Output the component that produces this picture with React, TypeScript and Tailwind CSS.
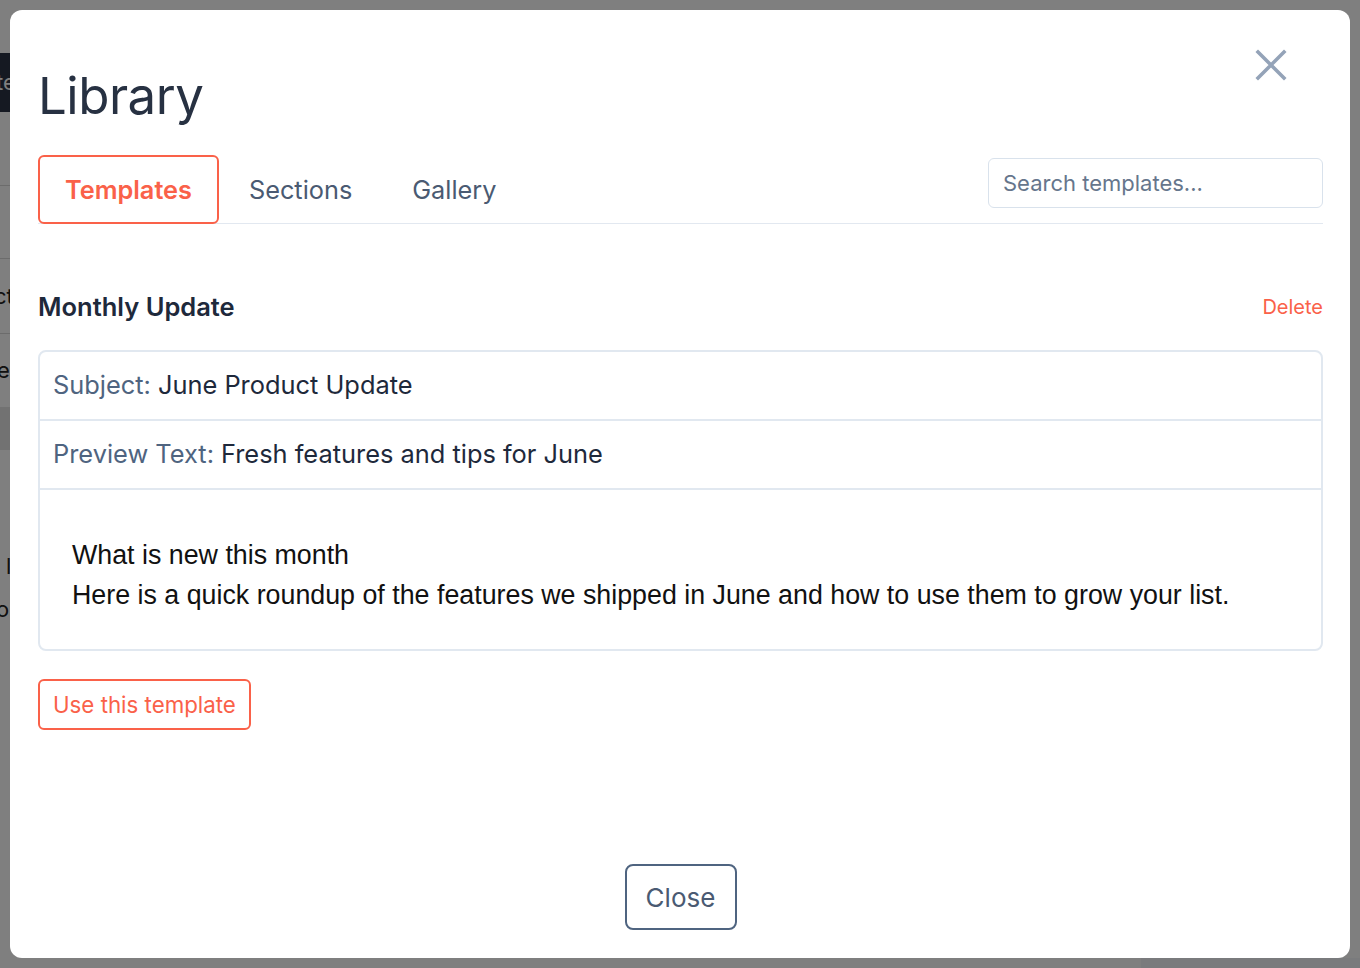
import React from "react";

export default function App() {
  return (
    <div className="relative h-[968px] w-full overflow-hidden bg-white" style={{ fontFamily: "Inter, 'Noto Sans', sans-serif" }}>
      {/* underlying page */}
      <div className="flex h-full flex-col">
        <div className="h-[53px]" />
        <div className="flex h-[59px] w-[300px] items-center bg-[#2a3344] text-[22px] text-white">
          <span className="-ml-[4px]">te</span>
        </div>
        <div className="h-[73px]" />
        <div className="h-[73px] w-[300px] border-t border-[#d8d8d8]" />
        <div className="flex h-[75px] w-[300px] items-center border-t border-[#d8d8d8] text-[22px] text-[#222]">
          <span className="-ml-[6px]">ct</span>
        </div>
        <div className="flex h-[74px] w-[300px] items-center border-t border-[#d8d8d8] text-[22px] text-[#222]">
          <span className="-ml-[3px]">e</span>
        </div>
        <div className="h-[43px] w-[300px] bg-[#e5e5e5]" />
        <div className="h-[100px]" />
        <div className="h-[43px] text-[22px] text-[#222]">
          <span className="ml-[6px]">l</span>
        </div>
        <div className="h-[43px] text-[22px] text-[#222]">
          <span className="-ml-[4px]">o</span>
        </div>
        <div className="flex-1" />
        <div className="flex h-[10px]">
          <div className="w-[1141px]" />
          <div className="flex-1 bg-[#f4f6fa]" />
        </div>
      </div>
      {/* overlay */}
      <div className="absolute inset-0 bg-black/50" />
      {/* modal */}
      <div className="absolute inset-[10px] flex flex-col rounded-[12px] bg-white pb-[28px] pl-[28px] pr-[27px] pt-[28px]">
        <div className="flex items-start justify-between">
          <h1 className="mt-[27px] text-[51px] font-normal leading-[62px] tracking-[-0.5px] text-[#273142]">Library</h1>
          <button className="mr-[35px] mt-[10px] flex h-[34px] w-[34px] items-center justify-center">
            <svg width="32" height="32" viewBox="0 0 32 32" fill="none" stroke="#94a3b8" strokeWidth="3.6" strokeLinecap="square">
              <path d="M3 3 L29 29 M29 3 L3 29" />
            </svg>
          </button>
        </div>

        <div className="mt-[28px] flex items-start justify-between border-b border-[#e2e8f0]">
          <div className="flex">
            <button className="-mb-px h-[69px] rounded-[6px] border-2 border-[#fa6149] px-[25px] text-[25.3px] font-semibold text-[#fa6149]">Templates</button>
            <button className="-mb-px h-[69px] border-2 border-transparent px-[28px] text-[25.3px] text-[#4a5a72]">Sections</button>
            <button className="-mb-px h-[69px] border-2 border-transparent px-[28px] text-[25.3px] text-[#4a5a72]">Gallery</button>
          </div>
          <div className="mt-[3px] flex h-[50px] w-[335px] items-center rounded-[6px] border border-[#d9e2ec] px-[14px] text-[22px] text-[#66768c]">
            Search templates...
          </div>
        </div>

        <div className="mt-[66px] flex items-center justify-between">
          <div className="text-[25.5px] font-semibold leading-[34px] text-[#1e293b]">Monthly Update</div>
          <div className="text-[20px] text-[#fa6149]">Delete</div>
        </div>

        <div className="mt-[26px] rounded-[8px] border-2 border-[#e1e8f0]">
          <div className="flex h-[67px] items-center px-[13px] text-[25.4px]">
            <span className="text-[#4f6480]">Subject:</span>
            <span className="ml-[7px] text-[#1e293b]">June Product Update</span>
          </div>
          <div className="flex h-[69px] items-center border-t-2 border-[#e1e8f0] px-[13px] text-[25.4px]">
            <span className="text-[#4f6480]">Preview Text:</span>
            <span className="ml-[7px] text-[#1e293b]">Fresh features and tips for June</span>
          </div>
          <div className="border-t-2 border-[#e1e8f0] px-[32px] pb-[34px] pt-[45px] text-[26.8px] leading-[40px] text-[#111]" style={{ fontFamily: "'Liberation Sans', Arial, sans-serif" }}>
            <div>What is new this month</div>
            <div>Here is a quick roundup of the features we shipped in June and how to use them to grow your list.</div>
          </div>
        </div>

        <div className="mt-[28px]">
          <button className="h-[51px] rounded-[6px] border-2 border-[#fa6149] px-[13px] text-[22.3px] text-[#fa6149]">Use this template</button>
        </div>

        <div className="mt-auto flex justify-center">
          <button className="h-[66px] w-[112px] rounded-[8px] border-2 border-[#4f6480] text-[26px] text-[#4a5a72]">Close</button>
        </div>
      </div>
    </div>
  );
}
